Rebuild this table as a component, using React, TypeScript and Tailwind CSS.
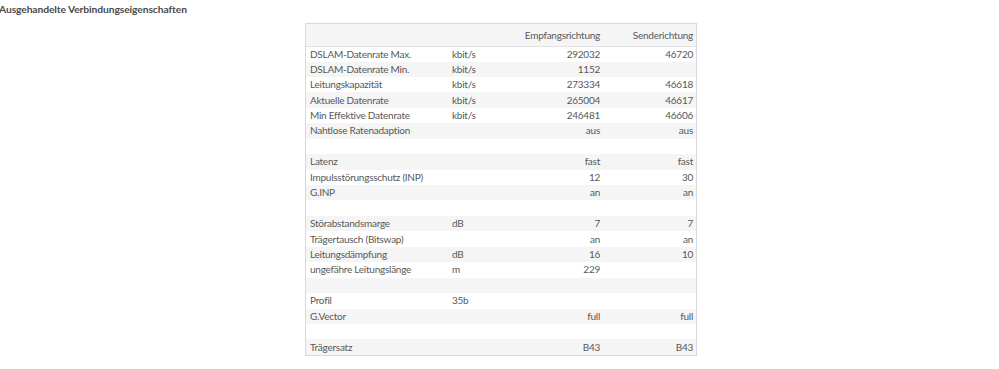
import React from "react";

type Row = [string, string, string, string];

const rows: Row[] = [
  ["DSLAM-Datenrate Max.", "kbit/s", "292032", "46720"],
  ["DSLAM-Datenrate Min.", "kbit/s", "1152", ""],
  ["Leitungskapazität", "kbit/s", "273334", "46618"],
  ["Aktuelle Datenrate", "kbit/s", "265004", "46617"],
  ["Min Effektive Datenrate", "kbit/s", "246481", "46606"],
  ["Nahtlose Ratenadaption", "", "aus", "aus"],
  ["", "", "", ""],
  ["Latenz", "", "fast", "fast"],
  ["Impulsstörungsschutz (INP)", "", "12", "30"],
  ["G.INP", "", "an", "an"],
  ["", "", "", ""],
  ["Störabstandsmarge", "dB", "7", "7"],
  ["Trägertausch (Bitswap)", "", "an", "an"],
  ["Leitungsdämpfung", "dB", "16", "10"],
  ["ungefähre Leitungslänge", "m", "229", ""],
  ["", "", "", ""],
  ["Profil", "35b", "", ""],
  ["G.Vector", "", "full", "full"],
  ["", "", "", ""],
  ["Trägersatz", "", "B43", "B43"],
];

export default function App() {
  return (
    <div
      className="w-[999px] h-[369px] bg-white text-[#585858]"
      style={{ fontFamily: '"Lato", "Noto Sans", sans-serif' }}
    >
      <div className="h-[19px] pt-[1px] text-[10.3px] font-bold leading-[16px] tracking-[-0.1px] text-[#4a4a4a] -ml-[1px]">
        Ausgehandelte Verbindungseigenschaften
      </div>
      <div className="ml-[305px] mt-[4px] w-[392px] border border-[#d9d9d9]">
        <table className="w-full border-collapse text-[10px] tracking-[-0.25px]">
          <colgroup>
            <col className="w-[142px]" />
            <col className="w-[70px]" />
            <col className="w-[85px]" />
            <col />
          </colgroup>
          <thead>
            <tr className="h-[22px] bg-[#f5f5f5] border-b border-[#e3e3e3]">
              <th></th>
              <th></th>
              <th className="text-right font-normal pr-[3px] pt-[2px]">Empfangsrichtung</th>
              <th className="text-right font-normal pr-[3px] pt-[2px]">Senderichtung</th>
            </tr>
          </thead>
          <tbody>
            {rows.map((r, i) => (
              <tr key={i} className={`h-[15.45px] ${i % 2 === 1 ? "bg-[#f5f5f5]" : "bg-white"}`}>
                <td className="pl-[4px] leading-[15px] whitespace-nowrap">{r[0]}</td>
                <td className="pl-[4px] leading-[15px]">{r[1]}</td>
                <td className="pr-[3px] text-right leading-[15px]">{r[2]}</td>
                <td className="pr-[3px] text-right leading-[15px]">{r[3]}</td>
              </tr>
            ))}
          </tbody>
        </table>
      </div>
    </div>
  );
}
